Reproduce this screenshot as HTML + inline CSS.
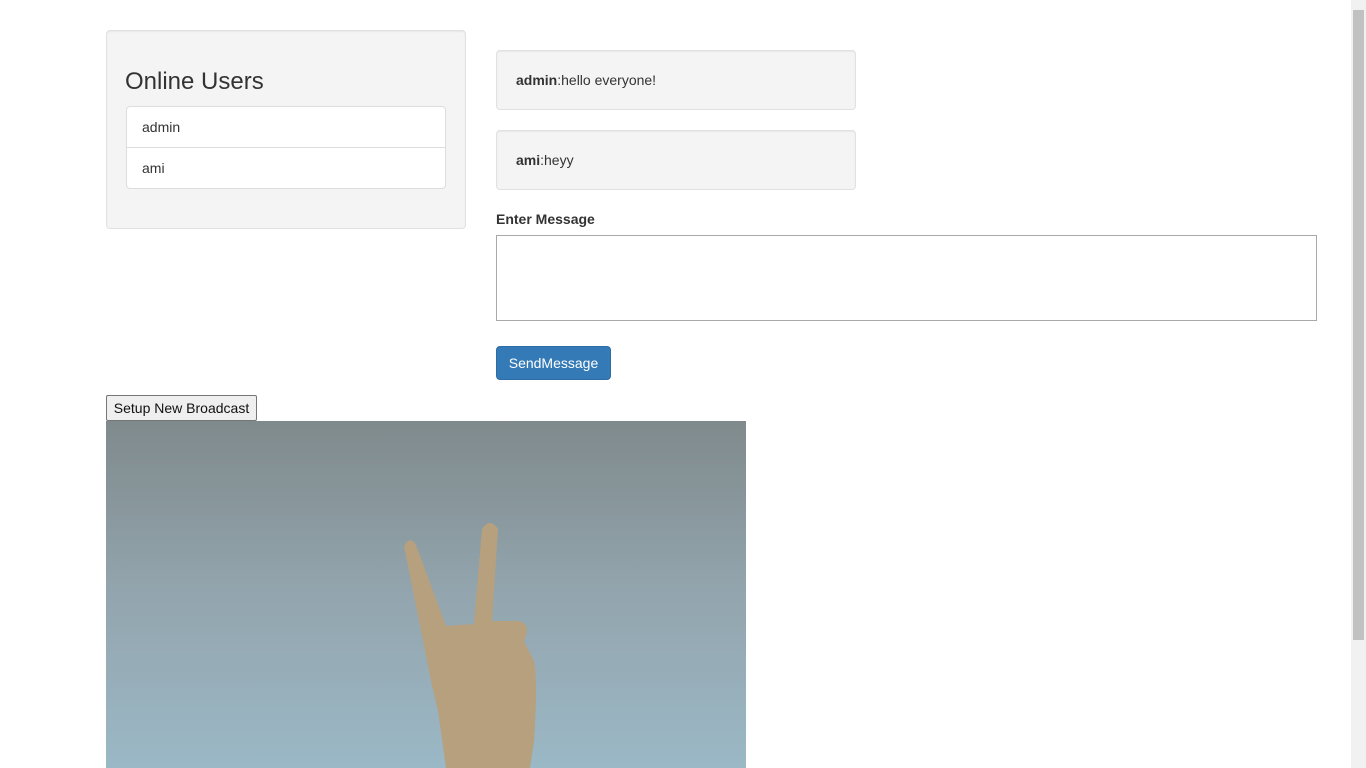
<!DOCTYPE html>
<html><head><meta charset="utf-8"><style>
html,body{margin:0;padding:0;overflow:hidden;background:#fff;width:1366px;height:768px}
body{font-family:"Liberation Sans",Arial,sans-serif;font-size:14px;color:#333;position:relative}
.well{position:absolute;background:#f4f4f4;border:1px solid #e1e1e1;border-radius:4px;box-shadow:inset 0 1px 1px rgba(0,0,0,.05);box-sizing:border-box}
h3{position:absolute;left:125px;top:68px;margin:0;font-size:24px;font-weight:500;line-height:28px}
.list{position:absolute;left:126px;top:106px;width:320px;background:#fff;border:1px solid #ddd;border-radius:4px;box-sizing:border-box}
.list div{height:40px;line-height:40px;padding-left:15px}
.list div+div{border-top:1px solid #ddd}
.msg{position:absolute;left:496px;width:360px;height:60px;line-height:58px;padding-left:19px}
.lbl{position:absolute;left:496px;top:211px;font-weight:bold}
.ta{position:absolute;left:496px;top:235px;width:821px;height:86px;border:1px solid #a9a9a9;box-sizing:border-box;background:#fff}
.btn{position:absolute;left:496px;top:346px;width:115px;height:34px;background:#337ab7;border:1px solid #2e6da4;border-radius:4px;box-sizing:border-box;color:#fff;text-align:center;line-height:32px}
.b2{position:absolute;left:106px;top:395px;width:151px;height:26px;background:#efefef;border:1px solid #767676;box-sizing:border-box;font-size:14px;line-height:24px;text-align:center;color:#111;border-radius:2px}
.sb{position:absolute;left:1351px;top:0;width:15px;height:768px;background:#f1f1f1}
.th{position:absolute;left:1353px;top:10px;width:11px;height:630px;background:#c1c1c1}
</style></head><body>
<div class="well" style="left:106px;top:30px;width:360px;height:199px"></div>
<h3>Online Users</h3>
<div class="list"><div>admin</div><div>ami</div></div>
<div class="well msg" style="top:50px"><b>admin</b>:hello everyone!</div>
<div class="well msg" style="top:130px"><b>ami</b>:heyy</div>
<div class="lbl">Enter Message</div>
<div class="ta"></div>
<div class="btn">SendMessage</div>
<div class="b2">Setup New Broadcast</div>
<svg style="position:absolute;left:106px;top:421px" width="640" height="347">
<defs><linearGradient id="g" x1="0" y1="0" x2="0" y2="1"><stop offset="0" stop-color="#7f8a8c"/><stop offset=".5" stop-color="#93a5ae"/><stop offset="1" stop-color="#9bb8c6"/></linearGradient></defs>
<rect width="640" height="347" fill="url(#g)"/>
<path d="M298,125 Q304,114 310,124 L340,205 L368,203 L376,108 Q384,96 392,108 L386,200 L412,200 Q426,202 418,220 L428,240 Q432,260 428,320 L424,347 L340,347 L332,290 L325,260 Z" fill="#b7a07e"/>
</svg>
<div class="sb"></div><div class="th"></div>
</body></html>
